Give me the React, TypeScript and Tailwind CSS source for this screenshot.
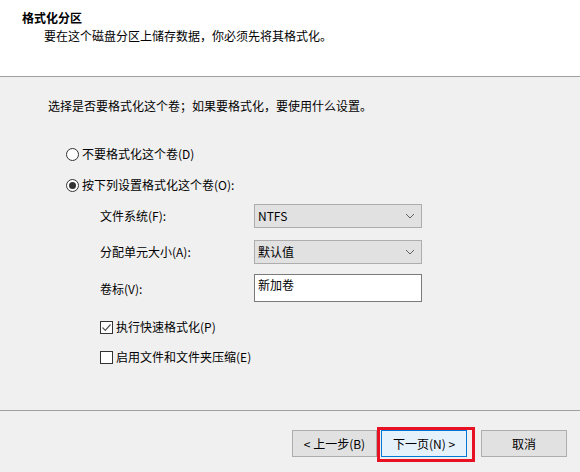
import React, { useState } from "react";

const Chevron = () => (
    <svg width="10" height="6" viewBox="0 0 10 6" className="shrink-0">
        <path d="M1 1 L5 5 L9 1" fill="none" stroke="#606060" strokeWidth="1" />
    </svg>
);

const Radio = ({ checked, label, onClick }: { checked: boolean; label: string; onClick: () => void }) => (
    <div className="flex items-center h-[16px] cursor-default" onClick={onClick}>
        <span className="w-[13px] h-[13px] rounded-full border border-[#333333] bg-white grid place-content-center">
            {checked && <span className="block w-[7px] h-[7px] rounded-full bg-[#333333]" />}
        </span>
        <span className="ml-[3px]">{label}</span>
    </div>
);

const Check = ({ checked, label, onClick }: { checked: boolean; label: string; onClick: () => void }) => (
    <div className="flex items-center h-[16px] cursor-default" onClick={onClick}>
        <span className="w-[13px] h-[13px] border border-[#333333] bg-white grid place-content-center">
            {checked && (
                <svg width="11" height="11" viewBox="0 0 11 11">
                    <path d="M1.5 5.5 L4.3 8.3 L9.5 2.5" fill="none" stroke="#555555" strokeWidth="1.2" />
                </svg>
            )}
        </span>
        <span className="ml-[3px]">{label}</span>
    </div>
);

const App = () => {
    const [format, setFormat] = useState(true);
    const [quick, setQuick] = useState(true);
    const [compress, setCompress] = useState(false);

    return (
        <div
            className="w-[580px] h-[472px] bg-[#f0f0f0] text-black text-[12px] leading-[16px] flex flex-col select-none"
            style={{ fontFamily: '"Noto Sans CJK SC", "Noto Sans", sans-serif' }}
        >
            {/* header */}
            <div className="h-[77px] shrink-0 bg-white border-b border-[#a0a0a0] pt-[10px]">
                <div className="pl-[22px] font-bold">格式化分区</div>
                <div className="pl-[44px] mt-[2px]">要在这个磁盘分区上储存数据，你必须先将其格式化。</div>
            </div>

            {/* body */}
            <div className="h-[333px] shrink-0 pt-[21px]">
                <div className="pl-[48px]">选择是否要格式化这个卷；如果要格式化，要使用什么设置。</div>

                <div className="pl-[66px] mt-[32px]">
                    <Radio checked={!format} label="不要格式化这个卷(D)" onClick={() => setFormat(false)} />
                    <div className="mt-[15px]">
                        <Radio checked={format} label="按下列设置格式化这个卷(O):" onClick={() => setFormat(true)} />
                    </div>
                </div>

                <div className="pl-[100px] mt-[11px]">
                    <div className="flex items-center h-[24px]">
                        <span className="w-[154px]">文件系统(F):</span>
                        <div className="w-[168px] h-[24px] bg-[#e1e1e1] border border-[#adadad] flex items-center justify-between pl-[3px] pr-[6px]">
                            <span>NTFS</span>
                            <Chevron />
                        </div>
                    </div>
                    <div className="flex items-center h-[24px] mt-[12px]">
                        <span className="w-[154px]">分配单元大小(A):</span>
                        <div className="w-[168px] h-[24px] bg-[#e1e1e1] border border-[#adadad] flex items-center justify-between pl-[3px] pr-[6px]">
                            <span>默认值</span>
                            <Chevron />
                        </div>
                    </div>
                    <div className="flex items-center h-[28px] mt-[10px]">
                        <span className="w-[154px] pt-[2px]">卷标(V):</span>
                        <div className="w-[168px] h-[28px] bg-white border border-[#7a7a7a] pl-[3px] pt-[2px]">
                            新加卷
                        </div>
                    </div>

                    <div className="mt-[17px]">
                        <Check checked={quick} label="执行快速格式化(P)" onClick={() => setQuick(!quick)} />
                    </div>
                    <div className="mt-[14px]">
                        <Check checked={compress} label="启用文件和文件夹压缩(E)" onClick={() => setCompress(!compress)} />
                    </div>
                </div>
            </div>

            {/* footer */}
            <div className="flex-1 border-t border-[#a0a0a0] pt-[19px] pr-[13px] flex justify-end items-start">
                <button className="w-[85px] h-[27px] bg-[#e1e1e1] border border-[#adadad] grid place-content-center">
                    &lt; 上一步(B)
                </button>
                <div className="relative ml-[4px]">
                    <button className="w-[86px] h-[27px] bg-[#e5f1fb] border border-[#0078d7] grid place-content-center">
                        下一页(N) &gt;
                    </button>
                    <span className="absolute left-[-4px] top-[-3px] w-[98px] h-[35px] border-[3px] border-[#e81123] pointer-events-none" />
                </div>
                <button className="ml-[14px] w-[86px] h-[27px] bg-[#e1e1e1] border border-[#adadad] grid place-content-center">
                    取消
                </button>
            </div>
        </div>
    );
};

export default App;
